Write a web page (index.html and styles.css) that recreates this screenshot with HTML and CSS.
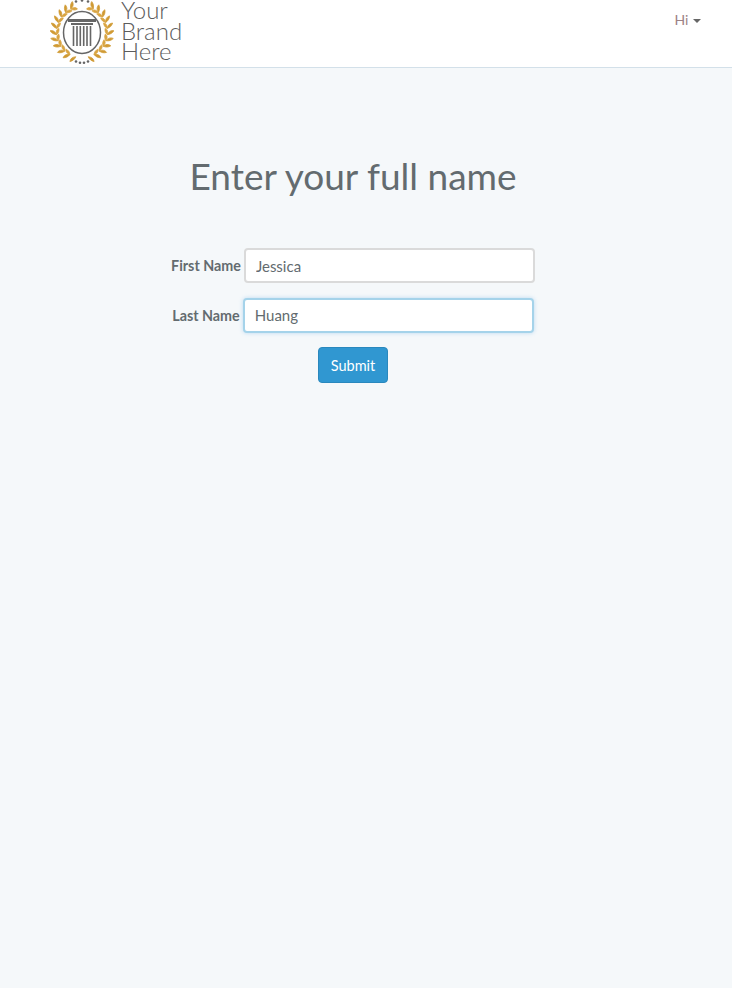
FILE: index.html
```html
<!DOCTYPE html>
<html lang="en">
<head>
  <meta charset="UTF-8" />
  <title>Enter your full name</title>
  <link rel="stylesheet" href="styles.css">
</head>
<body>

  <nav class="navbar">
    <a class="brand" href="#">
      <svg class="brand-logo" width="64" height="67" viewBox="-32 -32 64 67">
        <defs>
          <path id="hoja-a" d="M0 -25.5 C-.6 -28.4 -2 -30.4 -4.6 -31.6 C-5 -28.6 -3 -26.4 0 -25.5 Z" fill="#d09a33" stroke="#d09a33" stroke-width=".7" />
          <path id="hoja-b" d="M0 -25.5 C-1.6 -23.4 -3.4 -22.4 -6 -22.6 C-5.4 -25.2 -3 -26.2 0 -25.5 Z" fill="#d9a441" stroke="#d9a441" stroke-width=".7" />
          <g id="rama">
            <use href="#hoja-a" transform="rotate(26)" />
            <use href="#hoja-b" transform="rotate(26)" />
            <use href="#hoja-a" transform="rotate(40)" />
            <use href="#hoja-b" transform="rotate(40)" />
            <use href="#hoja-a" transform="rotate(54)" />
            <use href="#hoja-b" transform="rotate(54)" />
            <use href="#hoja-a" transform="rotate(68)" />
            <use href="#hoja-b" transform="rotate(68)" />
            <use href="#hoja-a" transform="rotate(82)" />
            <use href="#hoja-b" transform="rotate(82)" />
            <use href="#hoja-a" transform="rotate(96)" />
            <use href="#hoja-b" transform="rotate(96)" />
            <use href="#hoja-a" transform="rotate(110)" />
            <use href="#hoja-b" transform="rotate(110)" />
            <use href="#hoja-a" transform="rotate(124)" />
            <use href="#hoja-b" transform="rotate(124)" />
            <use href="#hoja-a" transform="rotate(138)" />
            <use href="#hoja-b" transform="rotate(138)" />
            <use href="#hoja-a" transform="rotate(152)" />
            <use href="#hoja-b" transform="rotate(152)" />
            <use href="#hoja-a" transform="rotate(166)" />
          </g>
        </defs>
        <use href="#rama" />
        <use href="#rama" transform="scale(-1 1)" />
        <g fill="#666">
          <circle cx="-6" cy="29.5" r="1.3" />
          <circle cx="-2" cy="30.8" r="1.3" />
          <circle cx="2" cy="30.8" r="1.3" />
          <circle cx="6" cy="29.5" r="1.3" />
          <circle cx="-6" cy="-30.5" r="1.3" />
          <circle cx="0" cy="-31.5" r="1.3" />
          <circle cx="6" cy="-30.5" r="1.3" />
        </g>
        <ellipse cx="0" cy="0.5" rx="18.5" ry="21" fill="none" stroke="#666" stroke-width="1.5" />
        <path d="M-14 -13 H14 V-10 H-14 Z M-11 -9 H11 V-7 H-11 Z" fill="#666" />
        <path d="M-8.5 -6 V14 M-5 -6 V14 M-1.7 -6 V14 M1.7 -6 V14 M5 -6 V14 M8.5 -6 V14" stroke="#666" stroke-width="1.6" />
      </svg>
      <span class="brand-text">Your<br>Brand<br>Here</span>
    </a>
    <a class="nav-user" href="#">Hi <span class="caret"></span></a>
  </nav>

  <main class="contenido">
    <h1>Enter your full name</h1>

    <form class="formulario">
      <div class="fila">
        <label for="nombre">First Name</label>
        <input class="campo" type="text" id="nombre" value="Jessica" />
      </div>
      <div class="fila">
        <label for="apellido">Last Name</label>
        <input class="campo campo-foco" type="text" id="apellido" value="Huang" />
      </div>
      <button class="boton" type="button">Submit</button>
    </form>
  </main>

</body>
</html>
```

FILE: styles.css
```css
body {
  margin: 0;
  background-color: #f5f8fa;
  font-family: 'Lato', sans-serif;
  color: #636b6f;
}

.navbar {
  display: flex;
  justify-content: space-between;
  height: 67px;
  background-color: #fff;
  border-bottom: 1px solid #d3e0e9;
  overflow: hidden;
}

.brand {
  display: flex;
  align-items: flex-start;
  gap: 7px;
  margin-left: 50px;
  text-decoration: none;
}

.brand-logo {
  display: block;
  flex: none;
}

.brand-text {
  font-size: 24px;
  font-weight: 300;
  line-height: 20.6px;
  color: #5c5c5c;
}

.nav-user {
  margin: 12px 31px 0 0;
  font-size: 14px;
  line-height: 16px;
  color: #9c8285;
  text-decoration: none;
}

.caret {
  display: inline-block;
  margin-left: 1px;
  vertical-align: middle;
  border-top: 4px solid #666;
  border-left: 4px solid transparent;
  border-right: 4px solid transparent;
}

.contenido {
  padding-right: 26px;
  text-align: center;
}

h1 {
  margin: 86px 0 50px;
  font-size: 37px;
  font-weight: 400;
  line-height: 44px;
  color: #636b6f;
}

.formulario {
  display: flex;
  flex-direction: column;
  align-items: center;
  gap: 14.5px;
}

.fila {
  display: flex;
  align-items: center;
  gap: 3px;
}

.fila label {
  font-size: 14.3px;
  font-weight: 700;
  color: #636b6f;
}

.campo {
  box-sizing: border-box;
  width: 291px;
  height: 35px;
  padding: 6px 10px;
  font-family: inherit;
  font-size: 15px;
  color: #636b6f;
  background-color: #fff;
  border: 2px solid #dadada;
  border-radius: 4px;
  outline: none;
}

.campo-foco {
  border-color: #a5d3ea;
  box-shadow: 0 0 4px rgba(102, 175, 233, 0.4);
}

.boton {
  width: 70px;
  height: 36px;
  font-family: inherit;
  font-size: 14.5px;
  color: #fff;
  background-color: #3097d1;
  border: 1px solid #2a88bd;
  border-radius: 4px;
}
```
